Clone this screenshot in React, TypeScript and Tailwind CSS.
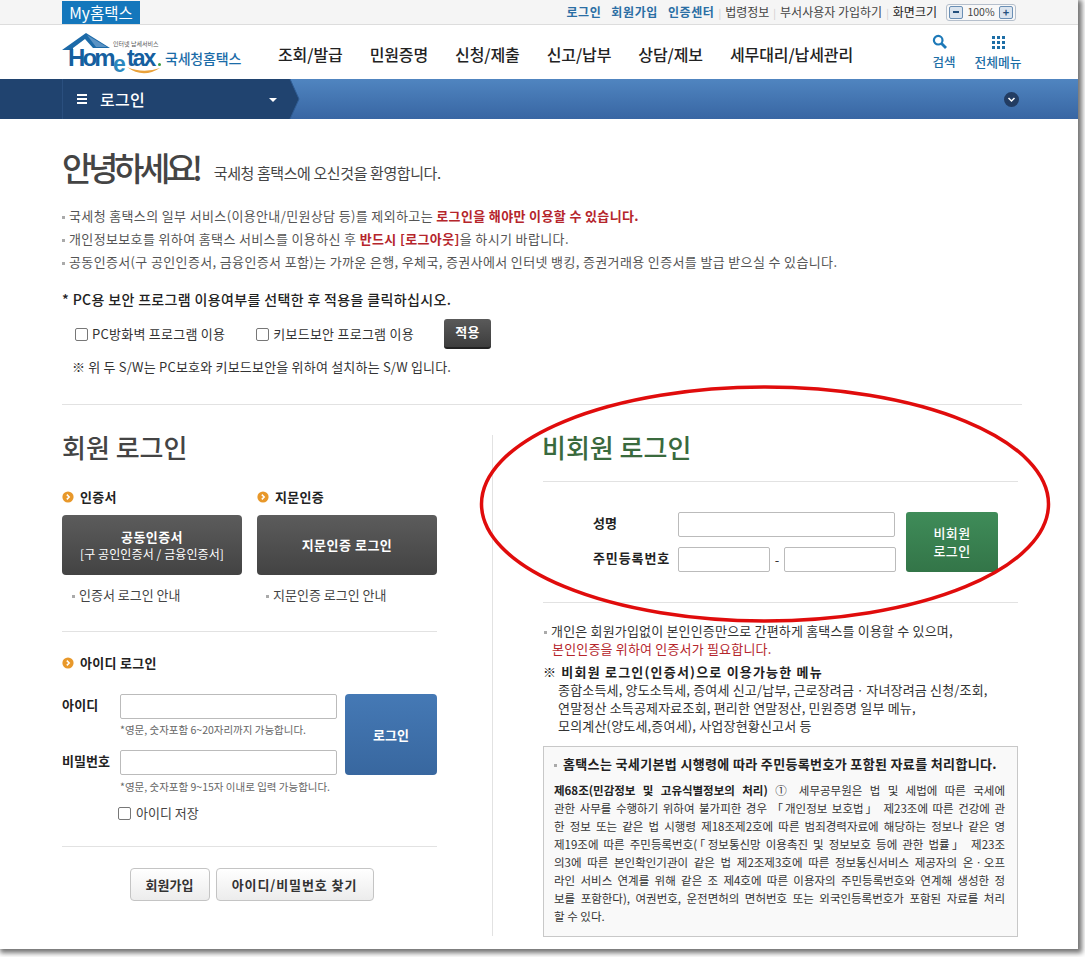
const F = '[font-family:"Noto_Sans_CJK_KR","Noto_Sans",sans-serif]';

function Bullet({ wide }: { wide?: boolean }) {
  return <span className={`inline-block w-[3px] h-[3px] bg-[#aaaaaa] align-middle ${wide ? "mr-[6px]" : "mr-[4px]"}`} />;
}

function Orange() {
  return (
    <svg width="12" height="12" viewBox="0 0 12 12" className="shrink-0">
      <circle cx="6" cy="6" r="5.6" fill="#e8982a" />
      <path d="M4.8 3.6 7.2 6 4.8 8.4" fill="none" stroke="#fff" strokeWidth="1.5" />
    </svg>
  );
}

function Logo() {
  return (
    <div className="relative w-[185px] h-[46px]">
      <svg width="56" height="22" viewBox="0 0 56 22" className="absolute left-0 top-0">
        <path d="M2 19 26 2 50 17H33L25 8 13 17v2Z" fill="#1c6aa8" />
        <path d="M27 4 47 16H36Z" fill="#5b93c4" />
      </svg>
      <span className="absolute left-[8px] top-[18px] text-[24px] leading-[18px] font-bold text-[#155f9f] tracking-[-2.9px] [font-family:'Liberation_Sans',sans-serif]">Hom</span>
      <span className="absolute left-[53px] top-[26px] text-[23px] leading-[14px] font-bold text-[#2b88bd] [font-family:'Liberation_Sans',sans-serif]">e</span>
      <span className="absolute left-[67px] top-[18px] text-[23px] leading-[18px] font-bold text-[#155f9f] tracking-[-2px] [font-family:'Liberation_Sans',sans-serif]">tax</span>
      <span className="absolute left-[98px] top-[32px] w-[3px] h-[3px] rounded-full bg-[#3c9a3c]" />
      <svg width="40" height="12" viewBox="0 0 40 12" className="absolute left-[66px] top-[35px]">
        <path d="M1 1Q17 13 34 2Q17 8 1 1Z" fill="#e9a23b" />
      </svg>
      <span className="absolute left-[53px] top-[9px] text-[6px] leading-[8px] text-[#555] whitespace-nowrap">인터넷 납세서비스</span>
      <span className="absolute left-[105px] top-[18px] text-[14px] leading-[18px] font-medium text-[#1b6ca8] tracking-[-.2px] whitespace-nowrap">국세청홈택스</span>
    </div>
  );
}

function TextInput({ w }: { w: string }) {
  return <div className={`${w} h-[25px] bg-white border border-[#bbbbbb] rounded-[2px] shrink-0`} />;
}

function Check() {
  return <span className="inline-block w-[13px] h-[13px] bg-white border border-[#777] rounded-[2px] shrink-0" />;
}

const law = [
  "관한 사무를 수행하기 위하여 불가피한 경우 「개인정보 보호법」 제23조에 따른 건강에 관",
  "한 정보 또는 같은 법 시행령 제18조제2호에 따른 범죄경력자료에 해당하는 정보나 같은 영",
  "제19조에 따른 주민등록번호(「정보통신망 이용촉진 및 정보보호 등에 관한 법률」 제23조",
  "의3에 따른 본인확인기관이 같은 법 제2조제3호에 따른 정보통신서비스 제공자의 온ㆍ오프",
  "라인 서비스 연계를 위해 같은 조 제4호에 따른 이용자의 주민등록번호와 연계해 생성한 정",
  "보를 포함한다), 여권번호, 운전면허의 면허번호 또는 외국인등록번호가 포함된 자료를 처리",
];

export default function App() {
  return (
    <div className={`${F} relative w-[1085px] h-[957px] overflow-hidden bg-white text-[13px] text-[#333]`}>
      <div className="w-[1078px] h-[949px] bg-white overflow-hidden shadow-[2px_2px_5px_2px_rgba(0,0,0,.55)]">
        {/* top bar */}
        <div className="h-[25px] bg-[#f5f5f5] border-b border-[#dddddd] pl-[62px] pr-[62px] flex items-start justify-between">
          <div className="mt-[1px] w-[78px] h-[23px] bg-[#1477bc] text-white text-[15.5px] leading-[22px] text-center whitespace-nowrap">My홈택스</div>
          <div className="flex items-center h-[24px] text-[12px] whitespace-nowrap">
            <span className="font-bold text-[#2a6ea4] tracking-[.6px]">로그인</span>
            <span className="font-bold text-[#2a6ea4] tracking-[.6px] ml-[10px]">회원가입</span>
            <span className="font-bold text-[#2a6ea4] tracking-[.6px] ml-[10px]">인증센터</span>
            <span className="text-[#cccccc] mx-[4px] text-[10px]">|</span>
            <span className="text-[#444]">법령정보</span>
            <span className="text-[#cccccc] mx-[4px] text-[10px]">|</span>
            <span className="text-[#444]">부서사용자 가입하기</span>
            <span className="text-[#cccccc] mx-[4px] text-[10px]">|</span>
            <span className="text-[#222]">화면크기</span>
            <div className="ml-[9px] w-[70px] h-[17px] border border-[#b5bfcc] rounded-[3px] bg-[#f8f8f8] flex items-center justify-between px-[2px]">
              <span className="w-[14px] h-[13px] border border-[#6a8fb5] rounded-[2px] bg-[#dbe4ee] flex items-center justify-center"><span className="w-[6px] h-[1.5px] bg-[#24507d]" /></span>
              <span className="text-[10.5px] text-[#444]">100%</span>
              <span className="w-[14px] h-[13px] border border-[#6a8fb5] rounded-[2px] bg-[#dbe4ee] text-[#24507d] text-[11px] leading-[11px] text-center font-bold">+</span>
            </div>
          </div>
        </div>
        {/* header */}
        <div className="h-[54px] bg-white pl-[60px] flex items-start relative">
          <div className="mt-[6px] shrink-0"><Logo /></div>
          <nav className="flex gap-[27px] ml-[33px] mt-[17px] text-[16px] leading-[24px] text-[#222] font-medium whitespace-nowrap tracking-[-.1px]">
            <span>조회/발급</span><span>민원증명</span><span>신청/제출</span><span>신고/납부</span><span>상담/제보</span><span>세무대리/납세관리</span>
          </nav>
          <div className="ml-[79px] mt-[9px] flex flex-col items-center w-[24px] text-[#1d6ea6]">
            <svg width="16" height="16" viewBox="0 0 16 16" className="self-start"><circle cx="6.2" cy="6.2" r="4.3" fill="none" stroke="#1d79b8" strokeWidth="2.2" /><path d="M9.5 9.5 14 14" stroke="#1d79b8" strokeWidth="2.8" /></svg>
            <span className="text-[12.5px] leading-[18px] mt-[3px] font-medium whitespace-nowrap">검색</span>
          </div>
          <div className="ml-[18px] mt-[11px] flex flex-col items-center w-[48px] text-[#1d6ea6]">
            <div className="grid grid-cols-3 gap-[2px] w-[13px]">
              {Array.from({ length: 9 }).map((_, i) => <span key={i} className="w-[3px] h-[3px] bg-[#1d6ea6]" />)}
            </div>
            <span className="text-[12.8px] leading-[18px] mt-[4px] font-medium whitespace-nowrap">전체메뉴</span>
          </div>
        </div>
        {/* blue bar */}
        <div className="h-[40px] flex items-stretch bg-gradient-to-b from-[#5085c0] to-[#3866a3] relative">
          <div className="w-[300px] relative shrink-0">
            <svg width="300" height="40" viewBox="0 0 300 40" className="absolute left-0 top-0"><path d="M0 0H290L299 20 290 40H0Z" fill="#20436f" /><path d="M290 0 299 20 290 40" fill="none" stroke="#2f5c93" /></svg>
            <div className="absolute left-[62px] top-0 bottom-0 border-l border-[#2a4f7e] flex items-center text-white">
              <span className="ml-[14px] flex flex-col gap-[2px] w-[10px]"><i className="h-[2px] bg-white" /><i className="h-[2px] bg-white" /><i className="h-[2px] bg-white" /></span>
              <span className="ml-[13px] text-[16px] font-medium tracking-[.3px] whitespace-nowrap">로그인</span>
            </div>
            <span className="absolute left-[269px] top-[19px] w-0 h-0 border-l-[4px] border-r-[4px] border-t-[4px] border-l-transparent border-r-transparent border-t-white" />
          </div>
          <div className="ml-auto mr-[59px] self-center w-[15px] h-[15px] rounded-full bg-[#223c62] flex items-center justify-center">
            <svg width="9" height="9" viewBox="0 0 9 9"><path d="M1.5 3 4.5 6 7.5 3" fill="none" stroke="#fff" strokeWidth="1.5" /></svg>
          </div>
        </div>
        {/* content */}
        <div className="pl-[62px] w-[1022px]">
          <div className="flex items-end h-[66px] whitespace-nowrap">
            <span className="text-[33px] leading-[44px] -mb-[4px] text-[#444] font-medium tracking-[-4.4px]">안녕하세요!</span>
            <span className="ml-[15px] text-[15px] leading-[24px] text-[#444] tracking-[-.4px]">국세청 홈택스에 오신것을 환영합니다.</span>
          </div>
          <div className="mt-[19px] text-[13px] leading-[23px] text-[#555] whitespace-nowrap tracking-[.36px]">
            <div><Bullet />국세청 홈택스의 일부 서비스(이용안내/민원상담 등)를 제외하고는 <b className="text-[#b5252b]">로그인을 해야만 이용할 수 있습니다.</b></div>
            <div><Bullet />개인정보보호를 위하여 홈택스 서비스를 이용하신 후 <b className="text-[#b5252b]">반드시 [로그아웃]</b>을 하시기 바랍니다.</div>
            <div><Bullet />공동인증서(구 공인인증서, 금융인증서 포함)는 가까운 은행, 우체국, 증권사에서 인터넷 뱅킹, 증권거래용 인증서를 발급 받으실 수 있습니다.</div>
          </div>
          <div className="mt-[15px] text-[14px] leading-[22px] font-medium text-[#222] whitespace-nowrap tracking-[.35px]">* PC용 보안 프로그램 이용여부를 선택한 후 적용을 클릭하십시오.</div>
          <div className="mt-[9px] ml-[13px] flex items-center h-[30px] whitespace-nowrap text-[#333] tracking-[.25px]">
            <Check /><span className="ml-[4px]">PC방화벽 프로그램 이용</span>
            <span className="ml-[31px] flex"><Check /></span><span className="ml-[4px]">키보드보안 프로그램 이용</span>
            <div className="ml-[30px] w-[47px] h-[30px] rounded-[3px] bg-gradient-to-b from-[#5a5a5a] to-[#3d3d3d] border-b-2 border-[#222] text-white text-[13px] font-bold leading-[26px] text-center">적용</div>
          </div>
          <div className="mt-[8px] ml-[10px] leading-[20px] whitespace-nowrap text-[#333] tracking-[.2px]">※ 위 두 S/W는 PC보호와 키보드보안을 위하여 설치하는 S/W 입니다.</div>
        </div>
        <div className="ml-[62px] mt-[27px] w-[960px] border-t border-[#e2e2e2] flex h-[544px]">
          {/* left */}
          <div className="w-[375px] shrink-0">
            <h2 className="mt-[24px] text-[26px] leading-[36px] font-medium text-[#444]">회원 로그인</h2>
            <div className="mt-[22px] flex gap-[15px]">
              <div className="w-[180px]">
                <div className="flex items-center gap-[6px] h-[20px] font-bold text-[#222] tracking-[.3px]"><Orange />인증서</div>
                <div className="mt-[8px] h-[60px] rounded-[4px] bg-gradient-to-b from-[#5c5c5c] to-[#434343] text-white flex flex-col items-center justify-center text-center">
                  <b className="text-[13px] leading-[18px] font-bold tracking-[.4px]">공동인증서</b>
                  <span className="text-[12px] leading-[16px] tracking-[.1px] whitespace-nowrap">[구 공인인증서 / 금융인증서]</span>
                </div>
                <div className="mt-[11px] ml-[10px] leading-[18px] whitespace-nowrap text-[#444]"><Bullet />인증서 로그인 안내</div>
              </div>
              <div className="w-[180px]">
                <div className="flex items-center gap-[6px] h-[20px] font-bold text-[#222] tracking-[.3px]"><Orange />지문인증</div>
                <div className="mt-[8px] h-[60px] rounded-[4px] bg-gradient-to-b from-[#5c5c5c] to-[#434343] text-white flex items-center justify-center font-bold tracking-[.5px]">지문인증 로그인</div>
                <div className="mt-[11px] ml-[9px] leading-[18px] whitespace-nowrap text-[#444]"><Bullet />지문인증 로그인 안내</div>
              </div>
            </div>
            <div className="mt-[27px] border-t border-[#e2e2e2]" />
            <div className="mt-[21px] flex items-center gap-[6px] h-[20px] font-bold text-[#222] tracking-[.3px]"><Orange />아이디 로그인</div>
            <div className="mt-[21px] flex">
              <div className="w-[283px] shrink-0">
                <div className="flex items-start">
                  <b className="w-[58px] leading-[22px] text-[#222] tracking-[.2px]">아이디</b>
                  <TextInput w="w-[217px]" />
                </div>
                <div className="ml-[58px] mt-[1px] h-[28px] leading-[20px] text-[10.5px] text-[#666] whitespace-nowrap">*영문, 숫자포함 6~20자리까지 가능합니다.</div>
                <div className="mt-[2px] flex items-start">
                  <b className="w-[58px] leading-[22px] text-[#222] whitespace-nowrap">비밀번호</b>
                  <TextInput w="w-[217px]" />
                </div>
                <div className="ml-[58px] mt-[2px] h-[21px] leading-[20px] text-[10.5px] text-[#666] whitespace-nowrap">*영문, 숫자포함 9~15자 이내로 입력 가능합니다.</div>
                <div className="ml-[56px] mt-[6px] flex items-center h-[18px] whitespace-nowrap text-[#444]"><Check /><span className="ml-[5px]">아이디 저장</span></div>
              </div>
              <div className="ml-0 w-[92px] h-[81px] rounded-[4px] bg-gradient-to-b from-[#4579b5] to-[#38679f] text-white font-bold flex items-center justify-center">로그인</div>
            </div>
            <div className="mt-[24px] border-t border-[#e2e2e2]" />
            <div className="mt-[21px] pl-[4px] flex justify-center gap-[6px] font-bold text-[#333] whitespace-nowrap">
              <div className="w-[80px] h-[33px] border border-[#c4c4c4] rounded-[4px] bg-gradient-to-b from-white to-[#ececec] flex items-center justify-center">회원가입</div>
              <div className="w-[158px] h-[33px] border border-[#c4c4c4] rounded-[4px] bg-gradient-to-b from-white to-[#ececec] flex items-center justify-center tracking-[.9px]">아이디/비밀번호 찾기</div>
            </div>
          </div>
          {/* vertical divider */}
          <div className="ml-[55px] mt-[30px] mb-[12px] w-px bg-[#e2e2e2] shrink-0" />
          {/* right */}
          <div className="ml-[50px] w-[475px] shrink-0">
            <h2 className="mt-[24px] -ml-[1px] text-[26px] leading-[36px] font-medium text-[#3a6a3d]">비회원 로그인</h2>
            <div className="mt-[16px] border-t border-[#e2e2e2]" />
            <div className="mt-[30px] flex">
              <div className="ml-[50px] w-[302px] shrink-0 whitespace-nowrap">
                <div className="flex items-center">
                  <b className="w-[85px] mb-[4px] text-[#222]">성명</b>
                  <TextInput w="w-[217px]" />
                </div>
              </div>
              <div className="ml-[11px] w-[92px] h-[60px] rounded-[3px] bg-gradient-to-b from-[#3f8c59] to-[#337548] text-white text-[13px] leading-[18px] font-medium flex items-center justify-center text-center shrink-0 tracking-[.3px]">비회원<br />로그인</div>
            </div>
            <div className="-mt-[25px] ml-[50px] flex items-center whitespace-nowrap">
              <b className="w-[85px] mb-[4px] text-[#222] tracking-[.9px]">주민등록번호</b>
              <TextInput w="w-[92px]" />
              <span className="w-[14px] text-center">-</span>
              <TextInput w="w-[112px]" />
            </div>
            <div className="mt-[30px] border-t border-[#e2e2e2]" />
            <div className="mt-[19px] leading-[18px] whitespace-nowrap text-[#333] ml-[1px] tracking-[.18px]">
              <div><Bullet />개인은 회원가입없이 본인인증만으로 간편하게 홈택스를 이용할 수 있으며,</div>
              <div className="ml-[8px] text-[#b5252b]">본인인증을 위하여 인증서가 필요합니다.</div>
            </div>
            <div className="mt-[5px] leading-[18px] font-bold text-[#222] whitespace-nowrap tracking-[1.2px]">※ 비회원 로그인(인증서)으로 이용가능한 메뉴</div>
            <div className="ml-[15px] leading-[18px] whitespace-nowrap text-[#333] tracking-[.18px]">
              <div>종합소득세, 양도소득세, 증여세 신고/납부, 근로장려금ㆍ자녀장려금 신청/조회,</div>
              <div>연말정산 소득공제자료조회, 편리한 연말정산, 민원증명 일부 메뉴,</div>
              <div>모의계산(양도세,증여세), 사업장현황신고서 등</div>
            </div>
            <div className="mt-[11px] h-[191px] border border-[#c8c8c8] bg-[#f9f9f9] pl-[10px] pr-[12px] pt-[8px] text-[11.5px] leading-[18px] text-[#333] whitespace-nowrap">
              <div className="font-bold text-[#222] text-[13px] tracking-[.35px]"><Bullet wide />홈택스는 국세기본법 시행령에 따라 주민등록번호가 포함된 자료를 처리합니다.</div>
              <div className="mt-[8px] [text-align-last:justify]"><b className="text-[#222]">제68조(민감정보 및 고유식별정보의 처리)</b> ① 세무공무원은 법 및 세법에 따른 국세에</div>
              {law.map((l) => <div key={l} className="[text-align-last:justify] whitespace-normal">{l}</div>)}
              <div>할 수 있다.</div>
            </div>
          </div>
        </div>
      </div>
      {/* hand-drawn highlight */}
      <svg width="1085" height="957" viewBox="0 0 1085 957" className="absolute left-0 top-0 pointer-events-none">
        <ellipse cx="765" cy="504" rx="283.5" ry="117" fill="none" stroke="#e00c0c" strokeWidth="3.5" />
      </svg>
    </div>
  );
}
